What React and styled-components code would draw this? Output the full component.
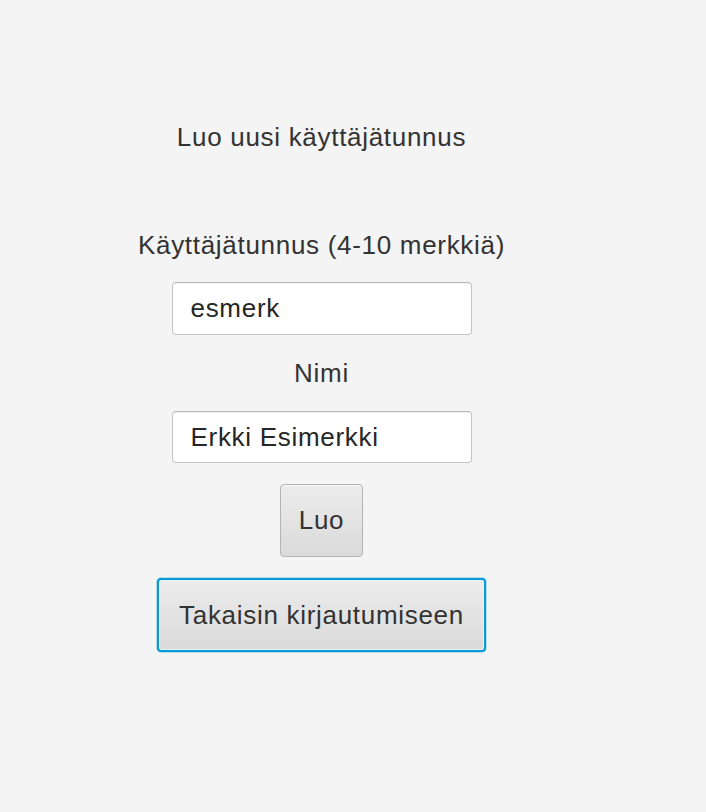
import React from "react";
import styled, { createGlobalStyle } from "styled-components";

const Global = createGlobalStyle`
  html, body { margin: 0; padding: 0; background: #f4f4f4; }
  body { font-family: "Liberation Sans", Arial, sans-serif; }
`;

const Page = styled.div`
  width: 643px;
  height: 812px;
  display: flex;
  flex-direction: column;
  align-items: center;
  padding-top: 122px;
  box-sizing: border-box;
  color: #333333;
  font-size: 26px;
  letter-spacing: 0.7px;
`;

const Label = styled.div`
  line-height: 30px;
  margin-top: ${(p) => p.$mt || 0}px;
  white-space: nowrap;
`;

const Field = styled.input`
  width: 300px;
  height: ${(p) => p.$h || 53}px;
  box-sizing: border-box;
  margin-top: ${(p) => p.$mt || 0}px;
  padding: 0 18px;
  font-family: inherit;
  font-size: inherit;
  letter-spacing: inherit;
  color: #262626;
  background: #fff;
  border: 1px solid #c4c4c4;
  border-top-color: #b9b9b9;
  border-radius: 4px;
  box-shadow: inset 0 1px 1px rgba(0, 0, 0, 0.06);
  outline: none;
`;

const Button = styled.button`
  box-sizing: border-box;
  height: ${(p) => p.$h}px;
  padding: 0 ${(p) => p.$px}px;
  margin-top: ${(p) => p.$mt || 0}px;
  font-family: inherit;
  font-size: inherit;
  letter-spacing: inherit;
  color: #333;
  border-radius: 4px;
  background: linear-gradient(#ececec, #dadada);
  border: ${(p) => (p.$focused ? "2px solid #049bd6" : "1px solid #b3b3b3")};
  box-shadow: ${(p) =>
    p.$focused
      ? "0 0 0 1px rgba(4,155,214,0.25), inset 0 0 0 1px #e9f3f8"
      : "inset 0 1px 0 #f8f8f8"};
  cursor: default;
`;

export default function App() {
  return (
    <>
      <Global />
      <Page>
        <Label>Luo uusi käyttäjätunnus</Label>
        <Label $mt={78}>Käyttäjätunnus (4-10 merkkiä)</Label>
        <Field $mt={22} defaultValue="esmerk" />
        <Label $mt={23}>Nimi</Label>
        <Field $mt={23} $h={52} defaultValue="Erkki Esimerkki" />
        <Button $mt={21} $h={73} $px={18}>Luo</Button>
        <Button $mt={21} $h={74} $px={20} $focused>Takaisin kirjautumiseen</Button>
      </Page>
    </>
  );
}
